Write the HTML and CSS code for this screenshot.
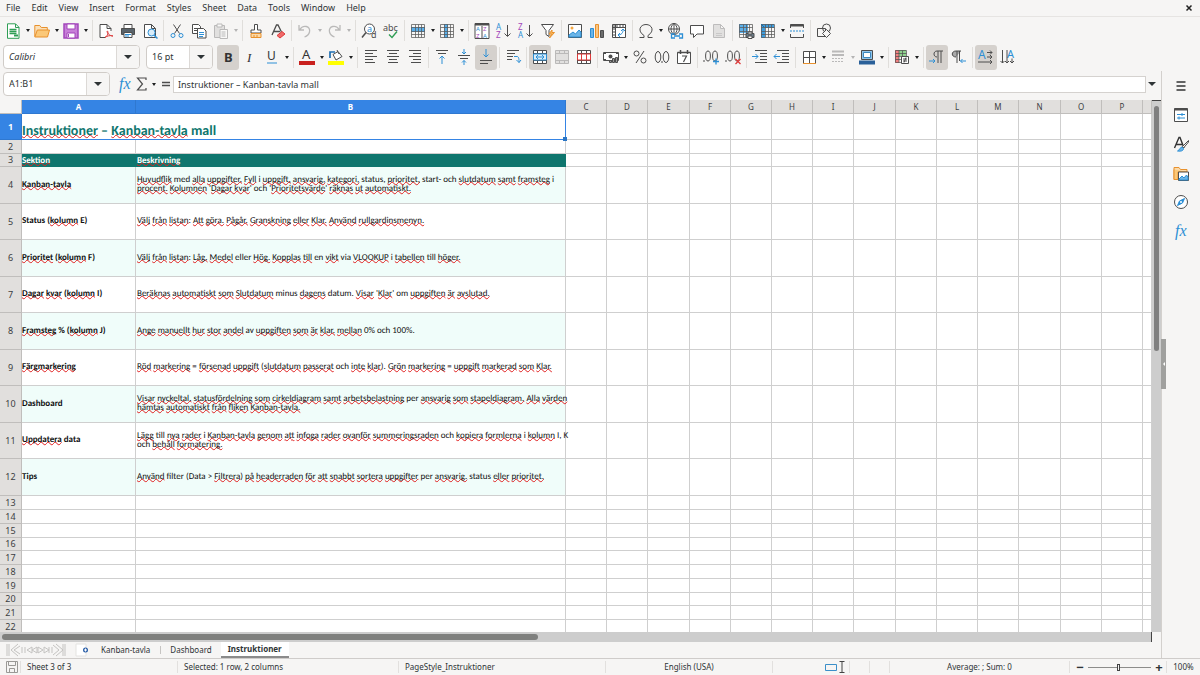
FILE: index.html
```html
<!DOCTYPE html>
<html lang="sv">
<head>
<meta charset="utf-8">
<title>Kanban-tavla mall</title>
<link rel="stylesheet" href="styles.css">
</head>
<body>
<div class="app">
  <nav class="menubar" aria-label="Menu">
    <button>File</button><button>Edit</button><button>View</button><button>Insert</button><button>Format</button><button>Styles</button><button>Sheet</button><button>Data</button><button>Tools</button><button>Window</button><button>Help</button>
    <button class="close" aria-label="Close document"><svg viewBox="0 0 8 8" width="8" height="8"><path d="M1.5 1.5l5 5M6.500 1.500l-5 5" stroke="#222" stroke-width="1.500"/></svg></button>
  </nav>
  <div class="toolbar" id="standard" role="toolbar" aria-label="Standard"></div>
  <div class="formatting">
    <div class="combo font-name"><input class="italic" aria-label="Font name" value="Calibri"><button aria-label="Font list"><i class="caret big"></i></button></div>
    <div class="combo font-size"><input aria-label="Font size" value="16 pt"><button aria-label="Size list"><i class="caret big"></i></button></div>
    <div class="toolbar" id="format" role="toolbar" aria-label="Formatting"></div>
  </div>
  <div class="main">
    <div class="workspace">
      <div class="formula-bar">
        <div class="combo name-box"><input aria-label="Name box" value="A1:B1"><button aria-label="Names"><i class="caret big"></i></button></div>
        <div class="formula-tools" id="formula"></div>
        <input class="formula-input" aria-label="Formula" value="Instruktioner – Kanban-tavla mall">
        <button class="expand" aria-label="Expand formula bar"><i class="caret big"></i></button>
      </div>
      <div class="sheet-area">
        <div class="sheet">
          <table class="grid">
            <colgroup id="columns"><col class="c-num"><col class="c-a"><col class="c-b"></colgroup>
            <thead><tr id="letters"><th class="corner"></th><th class="on">A</th><th class="on">B</th></tr></thead>
            <tbody id="rows">
              <tr class="title-row"><th class="on">1</th><td colspan="2" class="selected"><u>Instruktioner</u> – <u>Kanban-tavla</u> mall<i class="handle"></i></td></tr>
              <tr class="r14"><th>2</th><td></td><td></td></tr>
              <tr class="r13 head"><th>3</th><td><u>Sektion</u></td><td><u>Beskrivning</u></td></tr>
              <tr class="r37 mint"><th>4</th><td><u>Kanban-tavla</u></td><td><u>Huvudflik</u> med <u>alla</u> <u>uppgifter.</u> <u>Fyll</u> i <u>uppgift,</u> <u>ansvarig,</u> <u>kategori,</u> status, <u>prioritet,</u> start- och <u>slutdatum</u> <u>samt</u> <u>framsteg</u> i<br><u>procent.</u> <u>Kolumnen</u> '<u>Dagar kvar</u>' och '<u>Prioritetsvärde</u>' <u>räknas</u> <u>ut</u> <u>automatiskt.</u></td></tr>
              <tr class="r36"><th>5</th><td>Status (<u>kolumn</u> E)</td><td><u>Välj</u> <u>från</u> <u>listan</u>: <u>Att</u> <u>göra.</u> <u>Pågår.</u> <u>Granskning</u> <u>eller</u> <u>Klar.</u> <u>Använd</u> <u>rullgardinsmenyn.</u></td></tr>
              <tr class="r37 mint"><th>6</th><td><u>Prioritet</u> (<u>kolumn</u> F)</td><td><u>Välj</u> <u>från</u> <u>listan</u>: <u>Låg.</u> <u>Medel</u> eller <u>Hög.</u> <u>Kopplas</u> <u>till</u> en <u>vikt</u> via <u>VLOOKUP</u> i <u>tabellen</u> till <u>höger.</u></td></tr>
              <tr class="r36"><th>7</th><td><u>Dagar</u> <u>kvar</u> (<u>kolumn</u> I)</td><td><u>Beräknas</u> <u>automatiskt</u> <u>som</u> <u>Slutdatum</u> minus <u>dagens</u> datum. <u>Visar</u> '<u>Klar</u>' om <u>uppgiften</u> <u>är</u> <u>avslutad.</u></td></tr>
              <tr class="r37 mint"><th>8</th><td><u>Framsteg</u> % (<u>kolumn</u> J)</td><td><u>Ange</u> <u>manuellt</u> <u>hur</u> <u>stor</u> <u>andel</u> av <u>uppgiften</u> <u>som</u> <u>är</u> <u>klar.</u> <u>mellan</u> 0% och 100%.</td></tr>
              <tr class="r36"><th>9</th><td><u>Färgmarkering</u></td><td><u>Röd</u> <u>markering</u> = <u>försenad</u> <u>uppgift</u> (<u>slutdatum</u> <u>passerat</u> och <u>inte</u> <u>klar</u>). <u>Grön</u> <u>markering</u> = <u>uppgift</u> <u>markerad</u> <u>som</u> <u>Klar.</u></td></tr>
              <tr class="r37 mint"><th>10</th><td>Dashboard</td><td><u>Visar</u> <u>nyckeltal.</u> <u>statusfördelning</u> <u>som</u> <u>cirkeldiagram</u> <u>samt</u> <u>arbetsbelastning</u> per <u>ansvarig</u> <u>som</u> <u>stapeldiagram.</u> <u>Alla</u> <u>värden</u><br><u>hämtas</u> <u>automatiskt</u> <u>från</u> <u>fliken</u> <u>Kanban-tavla.</u></td></tr>
              <tr class="r36"><th>11</th><td><u>Uppdatera</u> data</td><td><u>Lägg</u> till <u>nya</u> <u>rader</u> i <u>Kanban-tavla</u> <u>genom</u> <u>att</u> <u>infoga</u> <u>rader</u> <u>ovanför</u> <u>summeringsraden</u> och <u>kopiera</u> <u>formlerna</u> i <u>kolumn</u> I, K<br>och <u>behåll</u> <u>formatering.</u></td></tr>
              <tr class="r37 mint"><th>12</th><td>Tips</td><td><u>Använd</u> filter (Data &gt; <u>Filtrera</u>) <u>på</u> <u>headerraden</u> <u>för</u> <u>att</u> <u>snabbt</u> <u>sortera</u> <u>uppgifter</u> per <u>ansvarig.</u> status <u>eller</u> <u>prioritet.</u></td></tr>
            </tbody>
          </table>
        </div>
        <div class="vscroll"><div class="thumb"></div></div>
      </div>
      <div class="hscroll"><div class="thumb"></div></div>
      <div class="tabs">
        <div class="tab-nav" aria-hidden="true">
          <svg viewBox="0 0 60 14" width="60" height="14" fill="none" stroke="#c4c3c1"><path d="M1 1v12M3 1v12M12 1L5 7l7 6M14 3l-6 4 6 4M16 4v6M19 4v6M26 4l-5 3 5 3zM31 4l-5 3 5 3zM32 4l5 3-5 3zM38 4l5 3-5 3zM43 4v6M46 4v6M47 2l6 5-6 5M50 1l7 6-7 6M57 1v12M59 1v12"/></svg>
        </div>
        <button class="add" aria-label="Add sheet"><svg viewBox="0 0 14 14" width="14" height="14"><path d="M1 1h10v12H1z" fill="#fff" stroke="#e4e3e1"/><circle cx="10.500" cy="7" r="2.500" fill="#2a5fa8"/><path d="M10.500 5.500v3M9 7h3" stroke="#fff"/></svg></button>
        <button class="tab">Kanban-tavla</button><button class="tab">Dashboard</button><button class="tab active">Instruktioner</button>
      </div>
    </div>
    <aside class="sidebar" id="sidebar" aria-label="Sidebar"></aside>
  </div>
  <footer class="status">
    <span class="save-state"><svg viewBox="0 0 12 12" width="12" height="12" fill="none" stroke="#9a9996"><path d="M.5.5h11v11H.5zM2.500.5v4h7v-4M3.500 11.500v-4h5v4"/></svg></span>
    <span>Sheet 3 of 3</span>
    <span>Selected: 1 row, 2 columns</span>
    <span>PageStyle_Instruktioner</span>
    <span class="center">English (USA)</span>
    <span class="center mode"><svg viewBox="0 0 20 12" width="20" height="12" fill="none"><path d="M.5 3.500h11v6H.5z" stroke="#3b8fc9"/><path d="M14.500.500h5M14.500 11.500h5M17 .5v11" stroke="#444"/></svg></span>
    <span></span><span></span>
    <span class="center">Average: ; Sum: 0</span>
    <span class="zoom"><button aria-label="Zoom out">−</button><input type="range" aria-label="Zoom" min="0" max="100" value="49"><button aria-label="Zoom in">+</button></span>
    <span class="center">100%</span>
  </footer>
</div>
<script src="script.js"></script>
</body>
</html>
```
FILE: styles.css
```css
* { box-sizing: border-box; }
html, body { height: 100%; margin: 0; }
body { background: #f6f5f4; color: #2e3436; font: 9px/12px "Noto Sans", sans-serif; overflow: hidden; }
button, input { font: inherit; color: inherit; border: 0; background: none; padding: 0; margin: 0; min-width: 0; }
svg { display: block; overflow: visible; }

.app { display: grid; grid-template-rows: 17px 27px 27px minmax(0, 1fr) 17px; height: 100vh; }

.menubar { display: flex; align-items: center; gap: 11px; padding: 0 7px 0 6px; border-bottom: 1px solid #e6e4e2; }
.menubar .close { margin-left: auto; }

.toolbar { display: flex; align-items: center; min-width: 0; }
#standard { padding: 0 2px; }
.tool { display: grid; place-items: center; width: 22px; height: 25px; flex: none; border-radius: 3px; }
.tool.pressed { background: #d5d1cd; }
.tool:disabled { opacity: .35; filter: grayscale(1); }
.drop { display: grid; place-items: center; width: 7px; height: 22px; flex: none; }
.drop:disabled { opacity: .3; }
.sep { width: 5px; height: 21px; flex: none; background: linear-gradient(#e0dedb, #e0dedb) center / 1px 100% no-repeat; }
.drop + .sep { width: 6px; }
.caret { display: block; border: solid transparent; border-width: 3px 2px 0; border-top-color: #1d1f20; }
.caret.big { border-width: 4px 4px 0; border-top-color: #2e3436; }

.formatting { display: flex; align-items: center; padding-left: 3px; padding-bottom: 1px; }
.combo { display: flex; height: 24px; background: #fff; border: 1px solid #d0ccc8; border-radius: 4px; overflow: hidden; flex: none; }
.combo input { flex: 1; padding-left: 5px; }
.combo button { display: grid; place-items: center; width: 23px; background: #f6f5f4; border-left: 1px solid #dcd9d6; }
.combo .italic { font-style: italic; }
.font-name { width: 137px; margin-right: 6px; }
.font-size { width: 67px; margin-right: 4px; }

.main { display: flex; min-height: 0; }
.workspace { flex: 1; display: grid; grid-template-rows: 29px minmax(0, 1fr) 10px 16px; min-width: 0; }
.formula-bar { display: flex; align-items: center; padding-left: 3px; padding-bottom: 3px; }
.name-box { width: 107px; margin-right: 6px; }
.formula-tools { display: flex; align-items: center; width: 57px; flex: none; }
.formula-tools .tool { width: 17px; }
.formula-input { flex: 1; height: 17px; padding-left: 4px; background: #fff; border: 1px solid #d5d2cf; }
.expand { display: grid; place-items: center; width: 15px; height: 17px; padding-right: 3px; }

.sheet-area { display: flex; min-height: 0; }
.sheet { flex: 1; min-width: 0; overflow: hidden; background: #fff; }
.grid { width: 100%; table-layout: fixed; border-collapse: separate; border-spacing: 0; }
.c-num { width: 22px; }
.c-a { width: 114px; }
.c-b { width: 430px; }
.c-41 { width: 41px; }
.c-42 { width: 42px; }
.grid th, .grid td { padding: 0; border-right: 1px solid #cfcfcf; border-bottom: 1px solid #cfcfcf; }
.grid th { background: #e1dfdd; border-color: #c0bebc; font-weight: 400; font-size: 9px; line-height: 10px; color: #3c4042; }
.grid thead th { height: 14px; font-size: 8px; }
.grid th.corner { background: #f6f5f4; }
.grid th.on { background: #3584e4; border-color: #2f78d0; color: #fff; font-weight: 700; }
.grid td { color: #111; font: 9px/9px Carlito, Lato, sans-serif; text-rendering: geometricPrecision; white-space: nowrap; }
.grid td:nth-child(2) { font-weight: 700; }
.grid td:nth-child(3) { padding-left: 1px; }
.title-row { height: 26px; }
.r37 { height: 37px; }
.r36 { height: 36px; }
.r14 { height: 14px; }
.r13 { height: 13px; }
.grid .r37 td, .grid .r36 td { padding-bottom: 2px; }
.grid .mint td:nth-child(2), .grid .mint td:nth-child(3) { background: #f0fdfa; }
.grid .head td:nth-child(2), .grid .head td:nth-child(3) { background: #0f766e; border-color: #0f766e; color: #fff; font-weight: 700; }
.grid td.selected { position: relative; border-color: #3584e4; color: #0f766e; font-size: 14px; line-height: 16px; padding-top: 8px; }
.handle { position: absolute; right: -2px; bottom: -2px; width: 4px; height: 4px; background: #2a76c6; }
.grid u { text-decoration: underline wavy #e02020 1px; text-underline-offset: -1px; text-decoration-skip-ink: none; }

.vscroll { width: 9px; background: #cdcdcd; padding: 5px 2px; border-top: 1px solid #444; }
.vscroll .thumb { height: 47%; border-radius: 3px; background: #7f7f7f; }
.hscroll { background: #cdcdcd; margin-right: 9px; padding: 2px; border-right: 1px solid #444; }
.hscroll .thumb { width: 46.7%; height: 6px; border-radius: 3px; background: #7f807e; }

.tabs { display: flex; align-items: stretch; padding-left: 6px; font-size: 8px; }
.tab-nav { display: flex; align-items: center; margin-right: 9px; }
.add { display: grid; place-items: center; width: 14px; margin-right: 2px; }
.tab { padding: 0 10px; }
.tab + .tab:not(.active) { padding-right: 9px; background: linear-gradient(#c6c4c2, #c6c4c2) left center / 1px 8px no-repeat; }
.tab.active { background: #fff; border-bottom: 2px solid #8b8b8b; font-weight: 700; padding: 0 7px; }

.sidebar { position: relative; width: 39px; flex: none; display: flex; flex-direction: column; align-items: center; gap: 4px; border-left: 1px solid #d3d0cd; padding-top: 2px; }
.sidebar .tool { width: 24px; }
.sidebar .splitter { position: absolute; left: -1px; top: 268px; width: 5px; height: 50px; background: #a0a09e; display: grid; place-items: center; }

.status { display: grid; grid-template-columns: 21px 157px 221px 207px 167px 77px 20px 20px 1fr 97px 33px; border-top: 1px solid #cfccca; align-items: center; font-size: 8px; }
.status > span { padding-left: 6px; height: 12px; border-right: 1px solid #e2e0de; white-space: nowrap; }
.status > .center { display: flex; justify-content: center; padding: 0; }
.status > .mode { justify-content: flex-end; padding-right: 4px; }
.status > span:last-child { border-right: 0; }
.status > .zoom { display: flex; align-items: center; gap: 4px; padding-right: 3px; }
.zoom button { font-size: 13px; font-weight: 700; width: 8px; line-height: 12px; }
.zoom input { flex: 1; appearance: none; height: 12px; background: linear-gradient(#8d8d8b, #8d8d8b) center / 100% 1px no-repeat; }
.zoom input::-webkit-slider-thumb { appearance: none; width: 3px; height: 7px; background: #f6f5f4; border: 1px solid #444; }
```
FILE: script.js
```javascript
const K = '#4d4d4d', B = '#2d8fd5', O = '#e8912d', R = '#dd3b3b', P = '#a347ba', G = '#2f9e55';
const p = (d, stroke = K, fill = 'none', extra = '') => `<path d="${d}" stroke="${stroke}" fill="${fill}" ${extra}/>`;
const glyph = (t, x, y, size, fill = K, extra = '') => `<text x="${x}" y="${y}" font-size="${size}" fill="${fill}" font-family="Noto Sans, sans-serif" ${extra}>${t}</text>`;
const gridLines = 'M1.500 1.500h13v13h-13zM1.500 4.500h13M1.500 8.500h13M1.500 11.500h13M5.500 1.500v13M8.500 1.500v13M11.500 1.500v13';
const lines = p(gridLines, '#5a5a5a', 'none', 'stroke-opacity=".75"');
const page = 'M2.500 1.500h7l4 4v9h-11zM9.500 1.500v4h4';

const icons = {
  new: p('M2.500.8h8l3.500 3.500v11h-11.500z', G, '#fff') + p('M10.500 1v3.500H14', G) + p('M4.500 6.500h7M4.500 8.500h7M4.500 10.500h7', G, 'none', 'stroke-width="1.500"') + p('M9 12.500h4', G, 'none', 'stroke-width="2"'),
  open: p('M.8 13.500v-11h5l1.500 2h6v3', O, '#fbe0b8') + p('M.8 14l2.500-7h12.200l-2 7z', O, '#fbc878'),
  save: p('M1 1h14v14H1z', P, '#c77fd8', 'stroke-width="1.500"') + p('M4 1v5h8V1z', P, '#fff') + p('M4 15v-5h8v5z', P, '#fff') + p('M5.500 11v3', P),
  pdf: p('M13 8V5.500l-4-4H2v13h5M9 1.500v4h4', K, '#fff') + p('M7 14.500c3-2 3.500-5 2.500-6.500-1.500 0 1 5 5.500 5-3-1-6 0-8 1.500z', R),
  print: p('M4 5V1.500h8V5', K, '#fff') + p('M1.500 5.500h13v6h-13z', K, '#59636a') + p('M4 9.500h8v5H4z', K, '#fff') + p('M5 11.500h6M5 13h4', B),
  preview: p(page, K, '#fff') + p('M12 12l3.500 3.500', B, 'none', 'stroke-width="1.500"') + '<circle cx="9.500" cy="9.500" r="3.500" fill="#d9edf9" stroke="#2d8fd5"/>',
  cut: p('M4.500 1.500l6 9M11.500 1.500l-6 9') + '<circle cx="4" cy="12.500" r="2" fill="none" stroke="#2d8fd5"/><circle cx="12" cy="12.500" r="2" fill="none" stroke="#2d8fd5"/>',
  copy: p('M1.500 1.500h6l2 2v7h-8zM3 5.500h4M3 7.500h4', K, '#fff') + p('M6.500 5.500h6l2.500 2.500v7H6.500z', K, '#fff') + p('M8 9.500h5M8 11.500h5M8 13.500h4', B),
  paste: p('M1.500 2.500h10v12h-10z', K, '#bbb') + p('M4 1h5v3H4z', K, '#fff') + p('M7 6.500h7.500v9H7z', K, '#fff') + p('M8.500 9h4M8.500 11h4M8.500 13h4'),
  brush: p('M6.500 7V1.500h3V7h3.500v3H3V7z', K, '#fff') + p('M3 10.500v4h10v-4zM6 12v2M9 12v2', O, '#fbd9a8'),
  clear: p('M2 12L6.500 2H8l3.500 7M4 8.500h6', K, 'none', 'stroke-width="1.300"') + p('M7 12.500l5-4 3 2.500-5 4z', R, '#f16b6b'),
  undo: p('M2 2v5h5M2.500 7C6 1 14 3 12.500 9c-.5 2-2.500 4-5 5', K, 'none', 'stroke-width="1.300"'),
  redo: p('M14 2v5H9M13.500 7C10 1 2 3 3.500 9c.5 2 2.500 4 5 5', K, 'none', 'stroke-width="1.300"'),
  find: '<circle cx="8.500" cy="6" r="5" fill="#fff" stroke="#4d4d4d"/>' + p('M5 9.500L1 14.500', K, 'none', 'stroke-width="1.500"') + glyph('a', 6, 9, 9, B) + glyph('d', 10, 15, 9),
  spell: glyph('abc', 0, 8, 9) + p('M6 11.500l3 3 5-6', G, 'none', 'stroke-width="1.400"'),
  row: p('M1 4h14v5H1z', 'none', '#5bb0ea') + lines,
  col: p('M5 1h4v14H5z', 'none', '#5bb0ea') + lines,
  sort: p('M1 .5h14v15H1zM8 3v12.500', K, '#fff') + p('M1 1.500h14', K, 'none', 'stroke-width="2"') + glyph('A', 2, 8, 6, B) + glyph('Z', 2, 15, 6, P) + glyph('Z', 9, 8, 6, P) + glyph('A', 9, 15, 6, B),
  az: glyph('A', 0, 7, 8, B) + glyph('Z', 0, 15, 8, P) + p('M11.500 2v11M8.500 10.500l3 3 3-3'),
  za: glyph('Z', 0, 7, 8, P) + glyph('A', 0, 15, 8, B) + p('M11.500 2v11M8.500 10.500l3 3 3-3'),
  filter: p('M1.500 1.500h12l-4.500 6v6l-3-2v-4z', K, '#fff') + p('M12 7l-3 4h2.500l-2 4 5-5.500H12z', O, '#f7b75c'),
  image: p('M1.500 1.500h13v13h-13z', K, '#fff') + p('M2 12l4-3 2.500 2L12 7l2 2v5H2z', B, '#6bb5e8') + '<circle cx="5" cy="5" r="1.500" fill="#f5a742"/>',
  chart: p('M1.500 5.500h3v9h-3z', B, '#6bb5e8') + p('M6.500 1.500h3v13h-3z', O, '#f9c684') + p('M11.500 7.500h3v7h-3z', K, '#6c6c6c'),
  pivot: p('M1.500 1.500h13v13h-13zM1.500 4.500h13M4.500 1.500v13', K, '#fff') + p('M2 3h12M3 5v9', K, 'none', 'stroke-dasharray="2 1"') + p('M12 6c.5 4-2 6-5 6M10 8l2-2 2 2M9 10l-2 2 2 2', B),
  omega: p('M1.500 14.500H6v-2C-1 8 2 1.500 8 1.500s9 6.500 2 11v2h4.500'),
  link: '<circle cx="7" cy="6" r="5.500" fill="#fff" stroke="#4d4d4d"/>' + p('M1.500 6h11M7 .5v11M7 .5C3 3 3 9 7 11.500M7 .5c4 2.500 4 8.500 0 11') + p('M8 11H4.500v4H8M12 11h3.500v4H12M7 13h6', B, 'none', 'stroke-width="1.300"'),
  comment: p('M1.500 2.500h13v8.500H8L4.500 14.500V11h-3z', K, '#fff'),
  header: p(page, '#555', '#bbb') + p('M5 10.500h6M5 12.500h6', '#777'),
  area: p('M1 1h9v9H1z', 'none', '#5bb0ea') + lines + p('M8 10.500h8v4H8z', K, '#6b7d89') + p('M10 9h4v2h-4zM10 13h4v2.500h-4z', K, '#fff'),
  freeze: p('M1 1h13v4H1zM1 1h4v14H1z', 'none', '#3f9ddd') + lines + p('M1 1l3 3', '#176fae'),
  split: p('M1.500 5V1.500h13V5M1.500 11v3.500h13V11') + p('M1.500 2.500h13', K, 'none', 'stroke-width="2"') + p('M1 8h14', B, 'none', 'stroke-dasharray="2 1"'),
  shapes: p('M1.500 5.500h8v8h-8z') + '<circle cx="10.500" cy="5" r="4" fill="none" stroke="#4d4d4d"/>' + p('M10.500 6.500l4 4-4 4-4-4z', K, '#f6f5f4'),
  bold: glyph('B', 4, 13, 13, '#333', 'font-weight="700"'),
  italic: glyph('I', 5, 13, 13, '#333', 'font-style="italic" style="font-family:Liberation Serif"'),
  under: glyph('U', 3, 11, 12, '#333') + p('M3 14h10', B),
  fontcolor: glyph('A', 3, 10, 13, '#333') + p('M0 14h16', '#c9211e', 'none', 'stroke-width="4"'),
  highlight: p('M0 14h16', '#ffff00', 'none', 'stroke-width="4"') + p('M5 5.500l5-3 4 5-6 3.500zM9 1l2 4', K, '#fff') + p('M2 9V3h5', '#1f6fb2', 'none', 'stroke-width="1.700"'),
  left: p('M2 1.500h12M2 4.500h8M2 7.500h12M2 10.500h8M2 13.500h10'),
  center: p('M2 1.500h12M4 4.500h8M2 7.500h12M4 10.500h8M3 13.500h10'),
  right: p('M2 1.500h12M6 4.500h8M2 7.500h12M6 10.500h8M4 13.500h10'),
  top: p('M2 1.500h12M4 4.500h8') + p('M8 15V7M5.500 9.500L8 7l2.500 2.500', B),
  middle: p('M2 6.500h12M4 9.500h8') + p('M8 0v5M6 3l2 2 2-2M8 16v-4.500M6 13.500l2-2 2 2', B),
  bottom: p('M2 11.500h12M2 14.500h8') + p('M8 0v8M5.500 5.500L8 8l2.500-2.500', B),
  wrap: p('M2 1.500h12M2 4.500h8M2 7.500h6M2 10.500h5') + p('M9 7.500h3c2 0 2 3 2 6M11.500 11l2.500 2.500L16 11', B),
  merge: p('M1.500 1.500h13v13h-13zM1.500 4.500h13M1.500 11.500h13M5.500 1.500v3M10.500 1.500v3M5.500 11.500v3M10.500 11.500v3', K, '#fff') + p('M1.500 5h13v6h-13z', B, '#d8edfa') + p('M4 8h8M6 6L4 8l2 2M10 6l2 2-2 2', B),
  mergec: p('M1.500 1.500h13v13h-13zM1.500 4.500h13M1.500 11.500h13M5.500 1.500v3M10.500 1.500v3M5.500 11.500v3M10.500 11.500v3', K, '#bbb'),
  unmerge: p('M1.500 1.500h13v13h-13zM1.500 4.500h13M5.500 1.500v13M10.500 1.500v13M1.500 11.500h13', K, '#fff') + p('M1.500 5h13v6h-13zM5.500 5v6M10.500 5v6', R),
  money: p('M.5 3.500h15v8H.5z', K, '#fff') + '<circle cx="7.500" cy="7.500" r="2" fill="#4d4d4d"/>' + p('M6.500 11.500h2v2h-2zM9.500 9.500h2v4h-2zM12.500 8.500h2v5h-2z', K, '#999') + p('M1 4h2M13 4h2M1 11h2', K, 'none', 'stroke-width="2"'),
  percent: '<circle cx="4.500" cy="4.500" r="2.500" fill="none" stroke="#4d4d4d"/><circle cx="11.500" cy="11.500" r="2.500" fill="none" stroke="#4d4d4d"/>' + p('M12 2L4 14'),
  number: '<ellipse cx="4" cy="8" rx="2.800" ry="5.500" fill="none" stroke="#4d4d4d"/><ellipse cx="12" cy="8" rx="2.800" ry="5.500" fill="none" stroke="#4d4d4d"/>' + p('M8 12v2'),
  date: p('M1.500 3.500h13v11h-13z', K, '#fff') + p('M1.500 3.500h13M4.500 1v4M11.500 1v4', K, 'none', 'stroke-width="1.500"') + p('M6 7h4.500l-3 6', K, 'none', 'stroke-width="1.200"'),
  decadd: '<ellipse cx="5" cy="7" rx="2.400" ry="5" fill="none" stroke="#4d4d4d"/><ellipse cx="12" cy="7" rx="2.400" ry="5" fill="none" stroke="#4d4d4d"/>' + p('M1 11v2') + p('M13 9.500v6M10 12.500h6', B, 'none', 'stroke-width="1.300"'),
  decdel: '<ellipse cx="5" cy="7" rx="2.400" ry="5" fill="none" stroke="#4d4d4d"/><ellipse cx="12" cy="7" rx="2.400" ry="5" fill="none" stroke="#4d4d4d"/>' + p('M1 11v2') + p('M10.500 10l5 5M15.500 10l-5 5', R, 'none', 'stroke-width="1.300"'),
  indent: p('M3 1.500h12M8 4.500h7M8 7.500h7M8 10.500h7M3 13.500h12') + p('M0 7.500h6M3.500 5L6 7.500 3.500 10', B),
  outdent: p('M3 1.500h12M8 4.500h7M8 7.500h7M8 10.500h7M3 13.500h12') + p('M6 7.500H0M2.500 5L0 7.500 2.500 10', B),
  border: p('M2.500 2.500h12v12h-12zM8.500 2v12M2 8.500h12', K, '#fff') + p('M2 14.500h13', O),
  line: p('M2 2.500h12M2 6h12', K, 'none', 'stroke-width="2"') + p('M2 9.500h12M2 12.500h12', K, 'none', 'stroke-dasharray="2 1"'),
  bordercolor: p('M2.500 1.500h11v9h-11z', K, '#8fc4ea') + p('M4.500 3.500h7v5h-7z', '#3b87bd', '#fff') + p('M0 13.500h16', '#2a6099', 'none', 'stroke-width="4"'),
  cond: p('M1 1h4v13H1z', 'none', '#f08080') + p('M5 1h7v6H5z', 'none', '#8fd18f') + p('M1.500 1.500h11v12h-11zM1.500 4.500h11M1.500 7.500h11M1.500 10.500h11M5 1.500v12M8.500 1.500v12', K, 'none', 'stroke-opacity=".7"') + p('M7.500 7.500h7v7h-7z', K, '#fff') + p('M9 10h4M9 12h4M12 8.500l-2 5'),
  ltr: p('M14 2H8c-4 0-4 6 0 6M9 2v12M12 2v12') + p('M0 12h6M4 10l2 2-2 2', B),
  rtl: p('M10 2H5C0 2 0 8 5 8', K, '#aaa') + p('M6 2v12M8.500 2v10') + p('M15 12H9.500M11.500 10l-2 2 2 2', B),
  horiz: glyph('A', 0, 10, 12, B) + p('M9 3.500h5M12 1.500l2 2-2 2M9 8h5M12 6l2 2-2 2M0 13h14M12 11l2 2-2 2'),
  vert: glyph('A', 7, 9, 11, B) + p('M2.500 1v13M.5 12l2 2 2-2M7 1v13M5 12l2 2 2-2M12 9.500V14M10 12l2 2 2-2'),
  fx: '<text x="2" y="13" font-size="16" fill="#2d8fd5" font-family="Liberation Serif, serif" font-style="italic">fx</text>',
  sigma: p('M12 4V2H3.500l5 6-5 6H12v-2', K, 'none', 'stroke-width="1.200"'),
  equals: p('M4 6.500h8M4 9.500h8', K, 'none', 'stroke-width="1.500"'),
  menu: p('M3.500 4h9M3.500 8h9M3.500 12h9', '#333', 'none', 'stroke-width="1.400"'),
  props: p('M1.500 1.500h13v13h-13z', K, '#fff') + p('M1.500 2.500h13', K, 'none', 'stroke-width="2"') + p('M4 7.500h8M4 11h8M9 6v3M6 9.500v3', B),
  styles: p('M1.500 12L6 1.500h1L11 12M3 8.500h6', '#333', 'none', 'stroke-width="1.400"') + p('M15.500 4.500l-6 6 1 1.500 5-6z', K, '#fff') + p('M9 11c-2 0-2 3-4.500 4 3 .5 6 0 6-2.500z', B, '#6bb5e8'),
  gallery: p('M1 14.500v-12h5l1.500 2H14v9', O, '#fbd9a8') + p('M1 4.500v10h4V7h9', O, '#fbc878') + p('M5.500 7h10v8.500h-10z', K, '#fff') + p('M6 14l3-3 2 2 2.500-3 1.500 2v3H6z', B, '#6bb5e8'),
  navigator: '<circle cx="8" cy="8" r="6.500" fill="#fff" stroke="#4d4d4d"/>' + p('M11.500 4.500L9.500 9 4.500 11.500 6.500 7z', B, '#2d8fd5') + '<circle cx="8" cy="8" r="1" fill="#fff"/>'
};

/* Layout tokens: "|" separator, "v" drop-down, "!" prefix pressed, "~" prefix disabled */
function build(id, spec) {
  document.getElementById(id).innerHTML = spec.split(' ').map(t => {
    if (t === '|') return '<span class="sep"></span>';
    if (t === 'v' || t === '~v') return `<button class="drop" aria-label="More"${t[0] === '~' ? ' disabled' : ''}><i class="caret"></i></button>`;
    const name = t.replace(/[!~]/, '');
    return `<button class="tool${t[0] === '!' ? ' pressed' : ''}" aria-label="${name}"${t[0] === '~' ? ' disabled' : ''}><svg viewBox="0 0 16 16" width="16" height="16">${icons[name]}</svg></button>`;
  }).join('');
}
build('standard', 'new v open v save v | pdf print preview | cut copy ~paste ~v | brush clear | ~undo ~v ~redo ~v | find spell | row v col v | sort az za filter | image chart pivot | omega v link comment ~header | area freeze v split | shapes');
build('format', '!bold italic under v | fontcolor v highlight v | left center right | top middle !bottom | wrap | !merge ~mergec unmerge | money v percent number date | decadd decdel | indent outdent | border v ~line ~v bordercolor v | cond v | !ltr rtl | !horiz vert');
build('formula', 'fx sigma v equals');
build('sidebar', 'menu props styles gallery navigator fx');
document.getElementById('sidebar').insertAdjacentHTML('beforeend', '<div class="splitter"><svg viewBox="0 0 4 6" width="4" height="6"><path d="M3 1v4L1 3z" fill="#fff"/></svg></div>');

/* Remaining columns C to P, and a partly visible Q */
const letters = 'CDEFGHIJKLMNOP';
const wide = 'EJN';
for (const c of letters) {
  document.getElementById('columns').insertAdjacentHTML('beforeend', `<col class="${wide.includes(c) ? 'c-42' : 'c-41'}">`);
  document.getElementById('letters').insertAdjacentHTML('beforeend', `<th>${c}</th>`);
}
document.getElementById('columns').insertAdjacentHTML('beforeend', '<col>');
document.getElementById('letters').insertAdjacentHTML('beforeend', '<th></th>');
const body = document.getElementById('rows');
for (const row of body.rows) row.insertAdjacentHTML('beforeend', '<td></td>'.repeat(15));
for (let n = 13; n <= 22; n++) {
  body.insertAdjacentHTML('beforeend', `<tr class="${n === 16 || n === 20 ? 'r13' : 'r14'}"><th>${n}</th>${'<td></td>'.repeat(17)}</tr>`);
}
```
